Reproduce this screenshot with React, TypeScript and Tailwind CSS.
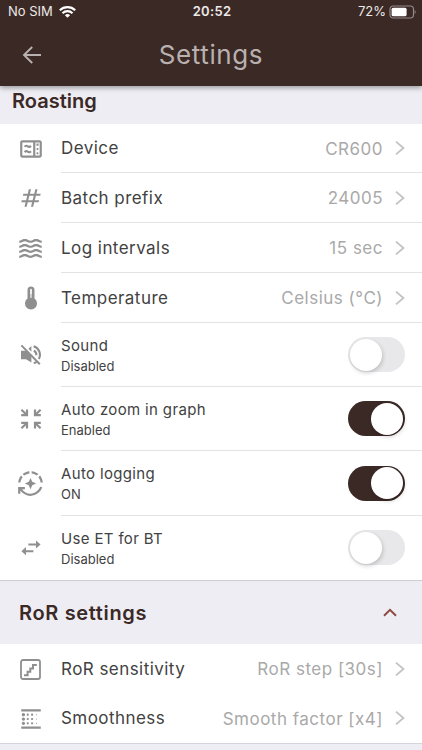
import React from "react";
import { MdAutoMode, MdBlurLinear, MdNumbers, MdOutlineMicrowave, MdWaves } from "react-icons/md";

interface LinkRowProps {
  icon: React.ReactNode;
  label: string;
  value: string;
  height: string;
  divider?: boolean;
}

interface ToggleRowProps {
  icon: React.ReactNode;
  label: string;
  status: string;
  on?: boolean;
  height: string;
  divider?: boolean;
}

// Solid bulb with a light tube
const ThermometerIcon = () => (
  <svg width="14" height="24" viewBox="0 0 14 24">
    <path
      d="M3.5 4a3.5 3.5 0 0 1 7 0v8.6a6 6 0 1 1-7 0Z"
      fill="currentColor"
    />
    <path d="M7 3.6v7.6" stroke="#fff" strokeWidth="1.7" strokeLinecap="round" />
    <path d="M7 8v7" stroke="currentColor" strokeWidth=".7" />
  </svg>
);

const SoundOffIcon = () => (
  <svg width="22" height="22" viewBox="0 0 22 22" fill="none" stroke="currentColor">
    <path d="M1 6.8h5l5.4 5.4v6.4L6 15.2H1Z" fill="currentColor" stroke="none" />
    <path d="M8.4 4.8 11.4 2v5.8Z" fill="currentColor" stroke="none" />
    <path d="M1.4 1.4 19.8 20.2" strokeWidth="2" />
    <path d="M13.6 2.3c5.4 1.6 8 7.6 5.2 12.8" strokeWidth="2.1" />
    <path d="M13.8 6.8c1.8.8 2.6 2.4 2.6 4.4" strokeWidth="2.1" />
    <path d="M16.8 17.8l-3 1.6" strokeWidth="2" />
  </svg>
);

// Four arrows pointing to the centre
const ZoomInIcon = () => (
  <svg width="22" height="22" viewBox="0 0 22 22" fill="none" stroke="currentColor" strokeWidth="2.2">
    <path d="M1.4 1.8 6.6 6.8M7 1.6v5.6H1.2" />
    <path d="M20.6 1.8 15.4 6.8M15 1.6v5.6h5.8" />
    <path d="M1.4 20.2 6.6 15.2M7 20.4v-5.6H1.2" />
    <path d="M20.6 20.2 15.4 15.2M15 20.4v-5.6h5.8" />
  </svg>
);

const SwapIcon = () => (
  <svg width="20" height="16" viewBox="0 0 20 16" fill="currentColor">
    <path d="M7.4 3.5H15V.4l4.6 4.1L15 8.6V5.5H7.4Z" />
    <path d="M12.4 10.2H5V7.1L.4 11.2 5 15.3v-3.1h7.4Z" />
  </svg>
);

const StairsIcon = () => (
  <svg width="21" height="21" viewBox="0 0 21 21" fill="none" stroke="currentColor">
    <rect x="1" y="1" width="19" height="19" rx="2" strokeWidth="1.8" />
    <path d="M4 16.2h3.6v-3.4h2.7V9.4H13V6h3.8" strokeWidth="2" />
  </svg>
);

const Chevron = () => (
  <svg className="shrink-0" width="10" height="16" viewBox="0 0 10 16" fill="none" stroke="#c4c4c7" strokeWidth="1.9">
    <path d="M1 1.6 8.4 8 1 14.4" />
  </svg>
);

const LinkRow = ({ icon, label, value, height, divider = true }: LinkRowProps) => (
  <div className={`flex ${height}`}>
    <div className="flex w-[61px] shrink-0 items-center justify-center text-[#8f8f8f]">{icon}</div>
    <div className={`flex flex-1 items-center border-b pr-[17px] ${divider ? "border-[#e3e3e5]" : "border-transparent"}`}>
      <span className="flex-1 pt-[2px] text-[17px] tracking-[0.45px] text-[#424242]">{label}</span>
      <span className="mr-[12px] pt-[3px] text-[17px] tracking-[0.5px] text-[#a9a9a9]">{value}</span>
      <Chevron />
    </div>
  </div>
);

const Toggle = ({ on }: { on?: boolean }) => (
  <div
    className={`flex h-[35px] w-[57px] items-center rounded-full px-[2px] ${
      on ? "justify-end bg-[#3b2926]" : "justify-start bg-[#e8e8ea]"
    }`}
  >
    <div className="h-[32px] w-[32px] rounded-full bg-white shadow-[1px_2px_4px_rgba(0,0,0,0.18)]" />
  </div>
);

const ToggleRow = ({ icon, label, status, on, height, divider = true }: ToggleRowProps) => (
  <div className={`flex ${height}`}>
    <div className="flex w-[61px] shrink-0 items-center justify-center text-[#8f8f8f]">{icon}</div>
    <div className={`flex flex-1 items-center border-b pr-[17px] ${divider ? "border-[#e3e3e5]" : "border-transparent"}`}>
      <div className="flex-1 pt-px">
        <div className="text-[15px] leading-[21px] tracking-[0.35px] text-[#424242]">{label}</div>
        <div className="text-[13px] leading-[20px] text-[#424242]">{status}</div>
      </div>
      <Toggle on={on} />
    </div>
  </div>
);

const StatusBar = () => (
  <div className="flex h-[24px] items-center pl-[8px] pr-[6px] text-[13px] text-[#ece9e8]">
    <div className="flex flex-1 items-center gap-[6px]">
      <span>No SIM</span>
      <svg width="17" height="12" viewBox="0 0 17 12" fill="none" stroke="#fff" strokeWidth="2.1">
        <path d="M.8 4.3a11 11 0 0 1 15.4 0M3.5 7.2a7 7 0 0 1 10 0" />
        <path d="M8.5 11.8 5.9 9.2a3.8 3.8 0 0 1 5.2 0Z" fill="#fff" stroke="none" />
      </svg>
    </div>
    <span className="font-semibold tracking-[0.3px]">20:52</span>
    <div className="flex flex-1 items-center justify-end gap-[3px]">
      <span>72%</span>
      <svg width="27" height="14" viewBox="0 0 27 14" fill="none">
        <rect x="1" y="1" width="23.5" height="12" rx="3.2" stroke="#94898a" strokeWidth="1.2" />
        <rect x="2.6" y="2.7" width="15" height="8.6" rx="1.6" fill="#fff" />
        <path d="M25.6 5v4c1.4-.7 1.4-3.3 0-4Z" fill="#94898a" />
      </svg>
    </div>
  </div>
);

const App = () => {
  return (
    <div className="h-[750px] w-[422px] overflow-hidden bg-[#eeedf3] font-['Inter',sans-serif]">
      <header className="relative h-[86px] bg-[#3b2926] shadow-[0_2px_5px_rgba(0,0,0,0.35)]">
        <StatusBar />
        <div className="flex h-[61px] items-center pl-[22px] pr-[42px]">
          <svg width="20" height="18" viewBox="0 0 20 18" fill="none" stroke="#b9b1af" strokeWidth="1.9">
            <path d="M19 9H2M10.2 1 2 9l8.2 8" />
          </svg>
          <h1 className="flex-1 text-center text-[26px] tracking-[0.6px] text-[#b9b1af]">Settings</h1>
        </div>
      </header>

      <h2 className="flex h-[38px] items-center pb-[8px] pl-[12px] text-[20px] font-semibold text-[#3b2926]">
        Roasting
      </h2>
      <section className="bg-white">
        <LinkRow icon={<MdOutlineMicrowave size={26} />} label="Device" value="CR600" height="h-[49px]" />
        <LinkRow icon={<MdNumbers size={26} />} label="Batch prefix" value="24005" height="h-[50px]" />
        <LinkRow icon={<MdWaves size={27} />} label="Log intervals" value="15 sec" height="h-[50px]" />
        <LinkRow icon={<ThermometerIcon />} label="Temperature" value="Celsius (°C)" height="h-[50px]" />
        <ToggleRow icon={<SoundOffIcon />} label="Sound" status="Disabled" height="h-[64px]" />
        <ToggleRow icon={<ZoomInIcon />} label="Auto zoom in graph" status="Enabled" on height="h-[64px]" />
        <ToggleRow icon={<MdAutoMode size={27} />} label="Auto logging" status="ON" on height="h-[65px]" />
        <ToggleRow icon={<SwapIcon />} label="Use ET for BT" status="Disabled" height="h-[64px]" divider={false} />
      </section>

      <div className="flex h-[64px] items-center border-t border-[#cfced5] pl-[19px] pr-[25px]">
        <h2 className="flex-1 text-[20px] font-semibold tracking-[0.65px] text-[#3b2926]">RoR settings</h2>
        <svg width="14" height="9" viewBox="0 0 14 9" fill="none" stroke="#8d4a40" strokeWidth="2">
          <path d="M1 7.8 7 1.8l6 6" />
        </svg>
      </div>
      <section className="border-b border-[#d5d4da] bg-white">
        <LinkRow icon={<StairsIcon />} label="RoR sensitivity" value="RoR step [30s]" height="h-[50px]" divider={false} />
        <LinkRow icon={<MdBlurLinear size={26} />} label="Smoothness" value="Smooth factor [x4]" height="h-[49px]" divider={false} />
      </section>
    </div>
  );
};

export default App;
